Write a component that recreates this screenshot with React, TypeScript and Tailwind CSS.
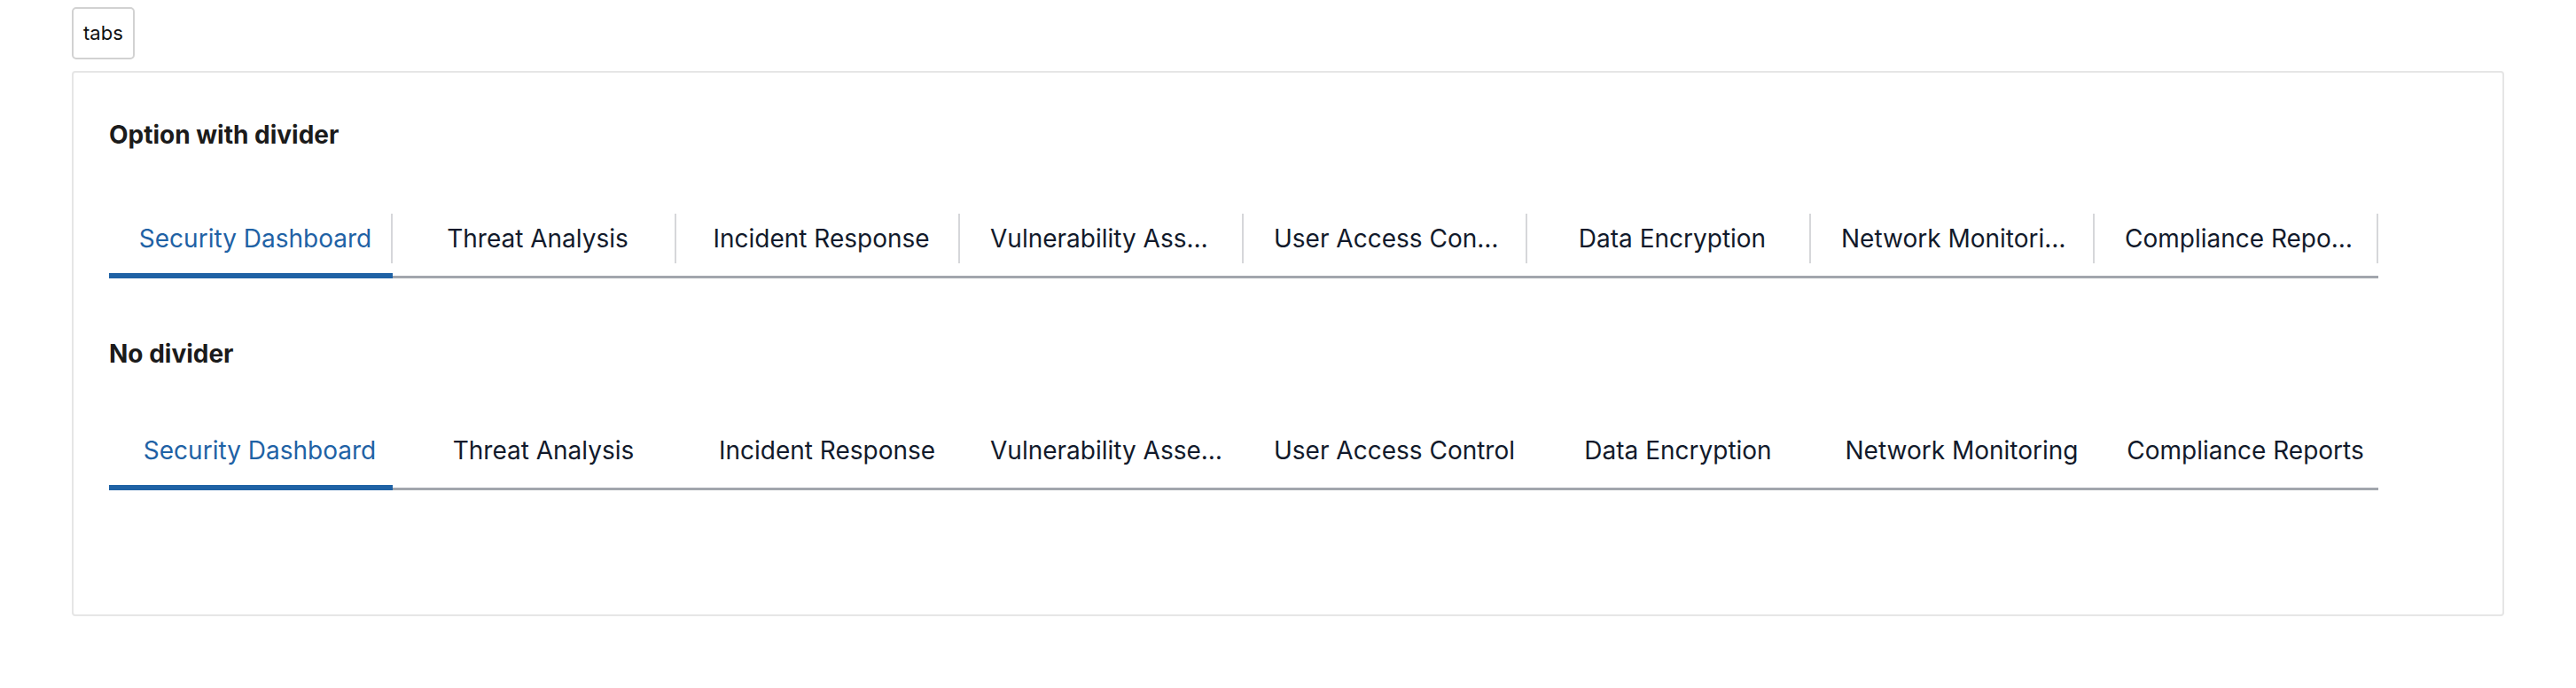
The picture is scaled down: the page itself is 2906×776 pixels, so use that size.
import { useState } from 'react';
import clsx from 'clsx';

const TABS = [
  'Security Dashboard',
  'Threat Analysis',
  'Incident Response',
  'Vulnerability Assessment',
  'User Access Control',
  'Data Encryption',
  'Network Monitoring',
  'Compliance Reports',
];

function TabList({ divider }: { divider: boolean }) {
  const [active, setActive] = useState(0);

  return (
    <div role="tablist" className="flex w-fit border-b-[3px] border-[#a2a6ad]">
      {TABS.map((label, i) => {
        const selected = i === active;
        return (
          <button
            key={label}
            role="tab"
            aria-selected={selected}
            title={label}
            onClick={() => setActive(i)}
            className="-mb-[3px] flex w-[320px] cursor-pointer flex-col"
          >
            <span
              className={clsx(
                'flex h-[56px] w-full items-center',
                !divider && 'pl-[34px] pr-[14px]',
                divider && 'border-r-2 border-[#d6d7da]',
                divider && (i === 0 ? 'pl-[31px] pr-[19px]' : 'pl-[34px] pr-[25px]')
              )}
            >
              <span
                className={clsx(
                  'block w-full truncate text-center text-[28px] leading-[34px]',
                  selected ? 'text-[#1f62a5]' : 'text-[#121a2b]'
                )}
              >
                {label}
              </span>
            </span>
            <span className={clsx('mt-[11px] h-[6px] w-full', selected ? 'bg-[#1f62a5]' : 'bg-transparent')} />
          </button>
        );
      })}
    </div>
  );
}

export default function App() {
  return (
    <main className="min-h-screen bg-white px-[81px] pt-[8px] font-['Inter','Noto_Sans',sans-serif]">
      <button className="h-[59px] rounded-[5px] border-2 border-[#d2d2d2] bg-white px-[11px] text-[22px] leading-[27px] text-[#111]">
        tabs
      </button>

      <section className="mt-[13px] rounded-[4px] border-2 border-[#e6e6e6] pt-[53px] pb-[140px] pl-[40px]">
        <h2 className="text-[28px] font-bold leading-[34px] text-[#1b1b1b]">Option with divider</h2>
        <div className="mt-[72px]">
          <TabList divider />
        </div>

        <h2 className="mt-[68px] text-[28px] font-bold leading-[34px] text-[#1b1b1b]">No divider</h2>
        <div className="mt-[64px]">
          <TabList divider={false} />
        </div>
      </section>
    </main>
  );
}
